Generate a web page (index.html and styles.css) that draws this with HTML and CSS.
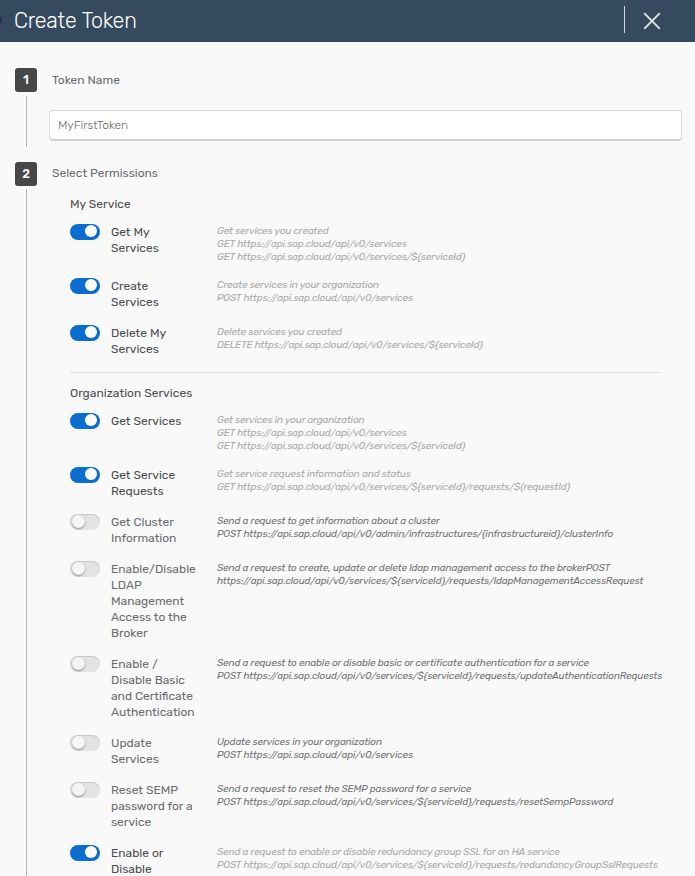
FILE: index.html
```html
<!DOCTYPE html>
<html lang="en">
<head>
<meta charset="utf-8">
<title>Create Token</title>
<link rel="stylesheet" href="styles.css">
</head>
<body>
<header class="header">
  <h1 class="title">Create Token</h1>
  <button class="close" aria-label="Close"><svg width="18" height="18" viewBox="0 0 18 18"><path d="M1.2 1.2 16.8 16.8M16.8 1.2 1.2 16.8"/></svg></button>
</header>
<main class="steps">
  <section class="step step-name">
    <div class="rail"><span class="badge">1</span><span class="line"></span></div>
    <div class="content">
      <h2 class="step-title">Token Name</h2>
      <input class="input" type="text" value="MyFirstToken" aria-label="Token Name">
    </div>
  </section>
  <section class="step step-permissions">
    <div class="rail"><span class="badge">2</span><span class="line"></span></div>
    <div class="content">
      <h2 class="step-title">Select Permissions</h2>
      <div class="group">
        <h3 class="group-title">My Service</h3>
        <div class="row on"><span class="toggle"></span><div class="label">Get My<br>Services</div><div class="desc">Get services you created<br>GET https://api.sap.cloud/api/v0/services<br>GET https://api.sap.cloud/api/v0/services/${serviceId}</div></div>
        <div class="row on"><span class="toggle"></span><div class="label">Create<br>Services</div><div class="desc">Create services in your organization<br>POST https://api.sap.cloud/api/v0/services</div></div>
        <div class="row on"><span class="toggle"></span><div class="label">Delete My<br>Services</div><div class="desc">Delete services you created<br>DELETE https://api.sap.cloud/api/v0/services/${serviceId}</div></div>
      </div>
      <div class="group">
        <h3 class="group-title">Organization Services</h3>
        <div class="row on"><span class="toggle"></span><div class="label">Get Services</div><div class="desc">Get services in your organization<br>GET https://api.sap.cloud/api/v0/services<br>GET https://api.sap.cloud/api/v0/services/${serviceId}</div></div>
        <div class="row on"><span class="toggle"></span><div class="label">Get Service<br>Requests</div><div class="desc">Get service request information and status<br>GET https://api.sap.cloud/api/v0/services/${serviceId}/requests/${requestId}</div></div>
        <div class="row"><span class="toggle"></span><div class="label">Get Cluster<br>Information</div><div class="desc">Send a request to get information about a cluster<br>POST https://api.sap.cloud/api/v0/admin/infrastructures/{infrastructureid}/clusterInfo</div></div>
        <div class="row"><span class="toggle"></span><div class="label">Enable/Disable<br>LDAP<br>Management<br>Access to the<br>Broker</div><div class="desc">Send a request to create, update or delete ldap management access to the brokerPOST<br>https://api.sap.cloud/api/v0/services/${serviceId}/requests/ldapManagementAccessRequest</div></div>
        <div class="row"><span class="toggle"></span><div class="label">Enable /<br>Disable Basic<br>and Certificate<br>Authentication</div><div class="desc">Send a request to enable or disable basic or certificate authentication for a service<br>POST https://api.sap.cloud/api/v0/services/${serviceId}/requests/updateAuthenticationRequests</div></div>
        <div class="row"><span class="toggle"></span><div class="label">Update<br>Services</div><div class="desc">Update services in your organization<br>POST https://api.sap.cloud/api/v0/services</div></div>
        <div class="row"><span class="toggle"></span><div class="label">Reset SEMP<br>password for a<br>service</div><div class="desc">Send a request to reset the SEMP password for a service<br>POST https://api.sap.cloud/api/v0/services/${serviceId}/requests/resetSempPassword</div></div>
        <div class="row on"><span class="toggle"></span><div class="label">Enable or<br>Disable</div><div class="desc">Send a request to enable or disable redundancy group SSL for an HA service<br>POST https://api.sap.cloud/api/v0/services/${serviceId}/requests/redundancyGroupSslRequests</div></div>
      </div>
    </div>
  </section>
</main>
</body>
</html>
```
FILE: styles.css
```css
* { box-sizing: border-box; }
html, body { height: 100%; }
body {
  margin: 0;
  height: 876px;
  display: flex;
  flex-direction: column;
  overflow: hidden;
  background: #f9f9f9;
  color: #6b6c6f;
  font-family: Rubik, Roboto, "Liberation Sans", sans-serif;
  font-size: 12px;
}
h1, h2, h3 { margin: 0; font-weight: 400; }
.header {
  position: relative;
  flex: 0 0 42px;
  display: flex;
  align-items: center;
  justify-content: space-between;
  padding: 0 13px 3px 14px;
  background: #354a5f;
  overflow: hidden;
}
.header::before {
  content: "";
  position: absolute;
  left: -10px;
  top: 14px;
  width: 11px;
  height: 12px;
  border-radius: 50%;
  background: #252c33;
  box-shadow: 0 0 2px #252c33;
}
.title { padding-top: 2px; color: #fff; font-size: 21.5px; font-weight: 300; line-height: 26px; letter-spacing: -0.2px; }
.close {
  width: 58px;
  height: 27px;
  padding: 1px 0 0 18px;
  border: 0;
  border-left: 1px solid #d3d8dc;
  background: none;
  text-align: left;
}
.close svg { display: block; margin-top: 1px; fill: none; stroke: #dfe3e3; stroke-width: 1.9; }
.steps { flex: 1; min-height: 0; padding: 26px 13px 0 15px; display: flex; flex-direction: column; }
.step { display: flex; gap: 12px; }
.step-name { flex: 0 0 94px; }
.step-permissions { flex: 1; min-height: 0; }
.rail { flex: 0 0 22px; display: flex; flex-direction: column; align-items: center; }
.badge {
  flex: 0 0 23px;
  width: 22px;
  border-radius: 3px;
  background: #474747;
  color: #fff;
  font-size: 12.5px;
  font-weight: 500;
  line-height: 24px;
  text-align: center;
}
.line { width: 1px; margin: 4px 0 15px 1px; flex: 1; background: #b5b5b5; }
.step-permissions .line { margin: 3px 0 0 1px; }
.content { flex: 1; min-width: 0; }
.step-title { margin-left: 3px; font-size: 12px; line-height: 24px; }
.step-permissions .step-title { line-height: 22px; }
.input {
  display: block;
  width: 633px;
  height: 31px;
  margin-top: 18px;
  padding: 0 8px;
  border: 1px solid #d9d9d9;
  border-bottom: 2px solid #d0d0d0;
  border-radius: 4px;
  background: #fff;
  color: #66676a;
  font: 300 12px Rubik, Roboto, sans-serif;
  outline: 0;
}
.group { width: 591px; margin-left: 21px; padding-top: 12px; }
.group + .group { border-top: 1px solid #dedede; }
.group-title { height: 28px; font-size: 12px; line-height: 16px; color: #4c4d50; letter-spacing: 0.03px; }
.row { display: grid; grid-template-columns: 41px 106px 1fr; padding-bottom: 15px; white-space: nowrap; }
.label { font-size: 12px; line-height: 16px; }
.desc { margin-bottom: -1px; padding-top: 1px; font-size: 10px; line-height: 13px; letter-spacing: -0.155px; font-style: italic; color: #707174; }
.on .label { color: #4c4d50; }
.on .desc { color: #a8a8a8; }
.toggle { width: 30px; height: 16px; padding: 2px; border-radius: 8px; background: #e2e3e4; box-shadow: inset 0 1px 1px #c5c6c8; }
.toggle::before {
  content: "";
  display: block;
  width: 13px;
  height: 13px;
  margin: -1px 0 0 0;
  border-radius: 50%;
  background: #f5f5f5;
  box-shadow: 0 1px 2px #888;
}
.on .toggle { background: #0a6ed1; box-shadow: none; }
.on .toggle::before { width: 12px; height: 12px; margin: -1px 0 0 13px; background: #fff; box-shadow: none; }
```
